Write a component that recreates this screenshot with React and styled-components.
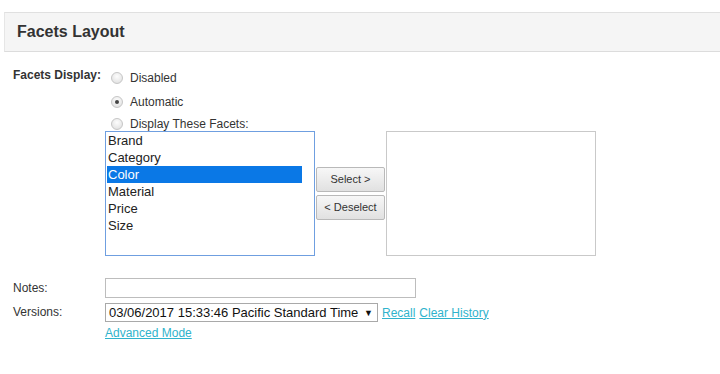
import React from "react";
import styled, { createGlobalStyle } from "styled-components";

const GlobalStyle = createGlobalStyle`
  body {
    margin: 0;
    background: #fff;
    font-family: Arial, "Liberation Sans", sans-serif;
    color: #333;
  }
`;

const Page = styled.div`
  width: 720px;
  height: 374px;
  overflow: hidden;
`;

const Header = styled.div`
  margin: 12px 0 0 4px;
  height: 38px;
  background: #f5f5f5;
  border-top: 1px solid #e0e0e0;
  border-bottom: 1px solid #dcdcdc;
  border-left: 1px solid #e6e6e6;
  display: flex;
  align-items: center;
  padding-left: 12px;
`;

const Title = styled.h2`
  margin: 0;
  font-size: 16px;
  font-weight: bold;
  color: #333;
`;

const Form = styled.div`
  display: grid;
  grid-template-columns: 92px auto;
  padding: 13px 0 0 13px;
  align-items: start;
`;

const Label = styled.div`
  font-size: 12px;
  font-weight: ${(p) => (p.bold ? "bold" : "normal")};
  color: #333;
  line-height: 20px;
  padding-top: ${(p) => p.top || 0}px;
`;

const Options = styled.div`
  display: flex;
  flex-direction: column;
  padding-top: 1px;
`;

const RadioRow = styled.label`
  display: flex;
  align-items: center;
  height: ${(p) => p.h || 24}px;
  padding-left: 6px;
  font-size: 12px;
  color: #333;
  gap: 7px;
`;

const Radio = styled.span`
  width: 12px;
  height: 12px;
  border-radius: 50%;
  border: 1px solid #c6c6c6;
  box-sizing: border-box;
  background: radial-gradient(circle at 50% 35%, #fdfdfd 0%, #e6e6e6 70%, #d6d6d6 100%);
  display: flex;
  align-items: center;
  justify-content: center;
  &::after {
    content: "";
    width: 4px;
    height: 4px;
    border-radius: 50%;
    background: ${(p) => (p.checked ? "#444" : "transparent")};
  }
`;

const Picker = styled.div`
  display: flex;
  align-items: center;
  margin-top: -4px;
`;

const ListBox = styled.div`
  width: 210px;
  height: 125px;
  box-sizing: border-box;
  border: 1px solid ${(p) => (p.focused ? "#6f9fe0" : "#c9c9c9")};
  background: #fff;
  padding: 0 12px 0 1px;
  margin-top: ${(p) => p.shift || 0}px;
`;

const Item = styled.div`
  font-size: 13px;
  line-height: 17px;
  height: 17px;
  padding-left: 1px;
  color: ${(p) => (p.selected ? "#fff" : "#222")};
  background: ${(p) => (p.selected ? "#0a78e6" : "transparent")};
`;

const Buttons = styled.div`
  display: flex;
  flex-direction: column;
  gap: 3px;
  margin: 0 1px;
`;

const Button = styled.button`
  width: 69px;
  height: 25px;
  font-family: Arial, "Liberation Sans", sans-serif;
  font-size: 11px;
  color: #333;
  border: 1px solid #b9b9b9;
  border-radius: 2px;
  background: linear-gradient(#f7f7f7, #e1e1e1);
  padding: 0;
`;

const Field = styled.div`
  display: flex;
  align-items: center;
  gap: 4px;
  flex-wrap: wrap;
  margin-top: ${(p) => p.top || 0}px;
`;

const TextInput = styled.div`
  width: 311px;
  height: 20px;
  box-sizing: border-box;
  border: 1px solid #bdbdbd;
  background: #fff;
`;

const Select = styled.div`
  width: 273px;
  height: 19px;
  box-sizing: border-box;
  border: 1px solid #a9a9a9;
  display: flex;
  align-items: center;
  justify-content: space-between;
  padding: 0 4px 0 3px;
  font-size: 13px;
  color: #111;
`;

const Arrow = styled.span`
  font-size: 9px;
  color: #111;
`;

const Link = styled.a`
  font-size: 12px;
  color: #2fb3cc;
  text-decoration: underline;
  cursor: pointer;
`;

const LinkRow = styled.div`
  grid-column: 2;
  padding-top: 2px;
  line-height: 16px;
`;

const facets = ["Brand", "Category", "Color", "Material", "Price", "Size"];

export default function App() {
  return (
    <Page>
      <GlobalStyle />
      <Header>
        <Title>Facets Layout</Title>
      </Header>
      <Form>
        <Label bold>Facets Display:</Label>
        <Options>
          <RadioRow h={24}>
            <Radio />
            Disabled
          </RadioRow>
          <RadioRow h={24}>
            <Radio checked />
            Automatic
          </RadioRow>
          <RadioRow h={20}>
            <Radio />
            Display These Facets:
          </RadioRow>
          <Picker>
            <ListBox focused>
              {facets.map((f) => (
                <Item key={f} selected={f === "Color"}>
                  {f}
                </Item>
              ))}
            </ListBox>
            <Buttons>
              <Button>Select &gt;</Button>
              <Button>&lt; Deselect</Button>
            </Buttons>
            <ListBox shift={1} />
          </Picker>
        </Options>

        <Label top={22}>Notes:</Label>
        <Field top={22}>
          <TextInput />
        </Field>

        <Label top={4}>Versions:</Label>
        <Field top={5}>
          <Select>
            03/06/2017 15:33:46 Pacific Standard Time
            <Arrow>▼</Arrow>
          </Select>
          <Link>Recall</Link>
          <Link>Clear History</Link>
        </Field>
        <LinkRow>
          <Link>Advanced Mode</Link>
        </LinkRow>
      </Form>
    </Page>
  );
}
